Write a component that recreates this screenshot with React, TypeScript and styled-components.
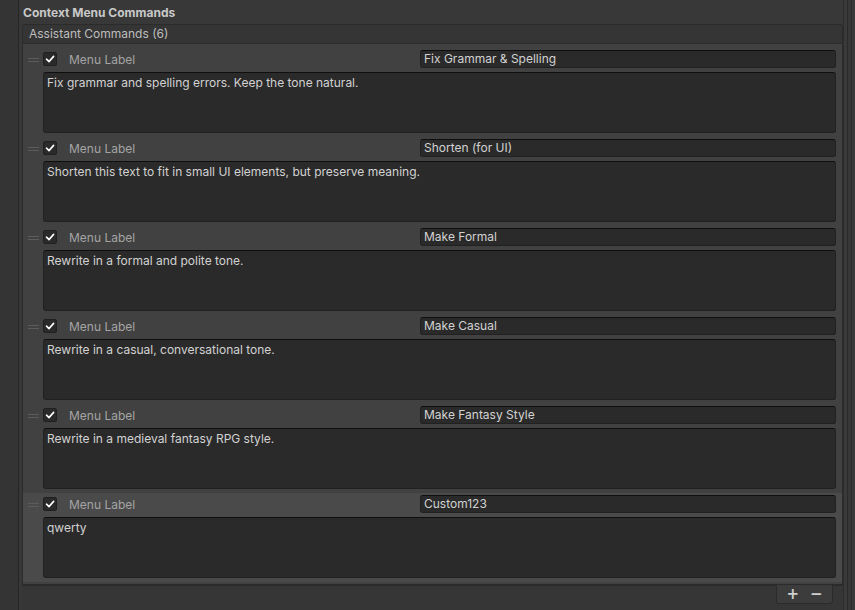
import React from 'react';
import styled, { createGlobalStyle } from 'styled-components';

const Global = createGlobalStyle`
  html, body { margin: 0; padding: 0; background: #383838; }
  body { font-family: Inter, "Noto Sans", sans-serif; font-size: 12px; color: #c4c4c4; }
  * { box-sizing: border-box; }
`;

const Page = styled.div`
  display: flex;
  width: 855px;
  height: 610px;
  overflow: hidden;
  background: #383838;
`;

const LeftGutter = styled.div`
  flex: none;
  width: 19px;
  background: #343434;
  border-right: 1px solid #262626;
`;

const Main = styled.div`
  flex: 1;
  min-width: 0;
  display: flex;
  flex-direction: column;
  padding-left: 3px;
`;

const RightGutter = styled.div`
  flex: none;
  width: 12px;
  display: flex;
  border-left: 1px solid #2c2c2c;
  background: #3a3a3a;
  padding-left: 3px;
`;

const GutterLine = styled.div`
  width: 5px;
  border-left: 1px solid #2a2a2a;
  border-right: 1px solid #2e2e2e;
  background: #373737;
`;

const Title = styled.div`
  height: 24px;
  padding: 5px 0 0 1px;
  line-height: 16px;
  font-weight: 700;
  color: #c8c8c8;
`;

const ListHeader = styled.div`
  height: 20px;
  background: #353535;
  border: 1px solid #2b2b2b;
  border-radius: 3px 3px 0 0;
  padding-left: 6px;
  line-height: 18px;
  color: #bdbdbd;
`;

const ListBody = styled.div`
  background: #414141;
  border: 1px solid #2b2b2b;
  border-top: none;
  padding: 4px 0 2px 0;
`;

const Element = styled.div<{ $selected?: boolean }>`
  display: flex;
  height: 89px;
  background: ${p => (p.$selected ? '#4a4a4a' : 'transparent')};
`;

const HandleCol = styled.div`
  flex: none;
  width: 20px;
  height: 22px;
  display: flex;
  flex-direction: column;
  justify-content: center;
  gap: 2px;
  padding-left: 5px;
  padding-top: 1px;
`;

const HandleLine = styled.div`
  width: 11px;
  height: 1px;
  background: #5c5c5c;
`;

const Content = styled.div`
  flex: 1;
  min-width: 0;
  display: flex;
  flex-direction: column;
  padding-right: 6px;
`;

const HeaderRow = styled.div`
  height: 22px;
  display: flex;
  align-items: center;
`;

const Check = styled.div`
  flex: none;
  width: 14px;
  height: 14px;
  border-radius: 2px;
  background: #2a2a2a;
  border: 1px solid #202020;
  display: flex;
  align-items: center;
  justify-content: center;
`;

const Label = styled.div`
  flex: none;
  width: 363px;
  padding-left: 12px;
  color: #a4a4a4;
  white-space: nowrap;
`;

const TextField = styled.div`
  flex: 1;
  height: 18px;
  background: #2a2a2a;
  border: 1px solid #212121;
  border-top-color: #0f0f0f;
  border-radius: 3px;
  padding-left: 3px;
  line-height: 16px;
  color: #d2d2d2;
  white-space: nowrap;
`;

const TextArea = styled.div`
  margin-top: 2px;
  height: 61px;
  background: #2a2a2a;
  border: 1px solid #212121;
  border-top-color: #0f0f0f;
  border-radius: 3px;
  padding: 2px 3px;
  line-height: 16px;
  color: #d2d2d2;
`;

const FooterRow = styled.div`
  display: flex;
  justify-content: flex-end;
  padding-right: 10px;
  border-top: 1px solid #2a2a2a;
  background: #363636;
  flex: 1;
  align-items: flex-start;
`;

const FooterBox = styled.div`
  width: 57px;
  height: 19px;
  margin-top: -1px;
  background: #3c3c3c;
  border: 1px solid #2b2b2b;
  border-top: none;
  border-radius: 0 0 3px 3px;
  display: flex;
  align-items: center;
  justify-content: space-around;
  padding: 0 4px;
`;

const FooterBtn = styled.span`
  font-family: "DejaVu Sans", sans-serif;
  font-weight: 700;
  font-size: 15px;
  line-height: 18px;
  color: #cfcfcf;
`;

const CheckIcon = () => (
  <svg width="10" height="10" viewBox="0 0 10 10">
    <path d="M1.5 5.2 L4 7.6 L8.6 2.4" fill="none" stroke="#ffffff" strokeWidth="1.6" strokeLinecap="round" strokeLinejoin="round" />
  </svg>
);

const items = [
  { name: 'Fix Grammar & Spelling', prompt: 'Fix grammar and spelling errors. Keep the tone natural.' },
  { name: 'Shorten (for UI)', prompt: 'Shorten this text to fit in small UI elements, but preserve meaning.' },
  { name: 'Make Formal', prompt: 'Rewrite in a formal and polite tone.' },
  { name: 'Make Casual', prompt: 'Rewrite in a casual, conversational tone.' },
  { name: 'Make Fantasy Style', prompt: 'Rewrite in a medieval fantasy RPG style.' },
  { name: 'Custom123', prompt: 'qwerty' },
];

export default function App() {
  return (
    <>
      <Global />
      <Page>
        <LeftGutter />
        <Main>
          <Title>Context Menu Commands</Title>
          <ListHeader>Assistant Commands (6)</ListHeader>
          <ListBody>
            {items.map((it, i) => (
              <Element key={i} $selected={i === items.length - 1}>
                <HandleCol>
                  <HandleLine />
                  <HandleLine />
                </HandleCol>
                <Content>
                  <HeaderRow>
                    <Check>
                      <CheckIcon />
                    </Check>
                    <Label>Menu Label</Label>
                    <TextField>{it.name}</TextField>
                  </HeaderRow>
                  <TextArea>{it.prompt}</TextArea>
                </Content>
              </Element>
            ))}
          </ListBody>
          <FooterRow>
            <FooterBox>
              <FooterBtn>+</FooterBtn>
              <FooterBtn>−</FooterBtn>
            </FooterBox>
          </FooterRow>
        </Main>
        <RightGutter>
          <GutterLine />
        </RightGutter>
      </Page>
    </>
  );
}
